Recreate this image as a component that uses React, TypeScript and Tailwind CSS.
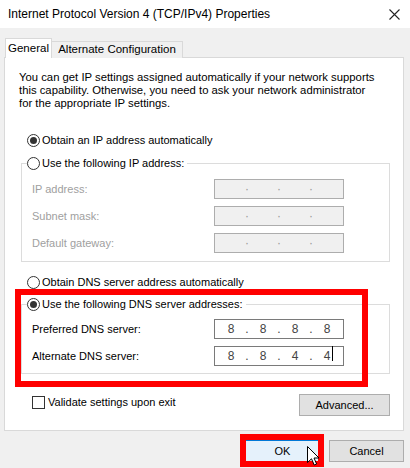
import { Fragment } from "react";

const Radio = ({ checked }: { checked?: boolean }) => (
  <span className="flex h-[13px] w-[13px] shrink-0 items-center justify-center rounded-full border border-[#333] bg-white">
    {checked && <span className="h-[7px] w-[7px] rounded-full bg-[#333]" />}
  </span>
);

const IpBox = ({ values, enabled, caret }: { values: string[]; enabled?: boolean; caret?: boolean }) => (
  <div
    className={`flex h-[20px] w-[130px] items-center border text-[12px] ${
      enabled ? "border-[#7a7a7a] bg-white text-[#444]" : "border-[#adadad] bg-[#f0f0f0] text-[#999]"
    }`}
  >
    {values.map((v, i) => (
      <Fragment key={i}>
        {i > 0 && <span className="flex w-0 justify-center">{enabled ? "." : "·"}</span>}
        <span className="flex flex-1 justify-center">
          <span className="relative">
            {v}
            {caret && i === 3 && <span className="absolute right-[-3px] top-[-1px] h-[15px] w-px bg-black" />}
          </span>
        </span>
      </Fragment>
    ))}
  </div>
);

const Row = ({ label, disabled, children }: { label: string; disabled?: boolean; children: React.ReactNode }) => (
  <div className="flex h-[20px] items-center">
    <span className={`w-[182px] ${disabled ? "text-[#a0a0a0]" : "text-black"}`}>{label}</span>
    {children}
  </div>
);

const Button = ({ label, w, primary }: { label: string; w: string; primary?: boolean }) => (
  <div
    className={`flex h-[22px] items-center justify-center border text-[11px] ${w} ${
      primary ? "border-[#0078d7] bg-[#e5f1fb]" : "border-[#adadad] bg-[#e1e1e1]"
    }`}
  >
    {label}
  </div>
);

export default function App() {
  const empty = ["", "", "", ""];
  return (
    <div className="relative h-[468px] w-[410px] overflow-hidden bg-[#f0f0f0] font-['Liberation_Sans',Arial,sans-serif] text-[11px] text-black">
      {/* title bar */}
      <div className="flex h-[28px] items-center justify-between bg-white pl-[8px] pr-[10px]">
        <span className="text-[12px]">Internet Protocol Version 4 (TCP/IPv4) Properties</span>
        <svg width="11" height="11" viewBox="0 0 11 11" className="mt-[1px]">
          <path d="M0.5 0.5 L10.5 10.5 M10.5 0.5 L0.5 10.5" stroke="#222" strokeWidth="1.1" />
        </svg>
      </div>

      <div className="px-[4px] pt-[10px]">
        {/* tabs */}
        <div className="relative z-10 -mb-px flex h-[20px] items-end pl-[1px] text-[11.5px]">
          <div className="flex h-[20px] w-[47px] items-center justify-center border border-b-0 border-[#d9d9d9] bg-white pt-[1px]">
            General
          </div>
          <div className="flex h-[17px] w-[131px] items-center justify-center border border-b-0 border-l-0 border-[#d9d9d9] bg-[#f0f0f0]">
            Alternate Configuration
          </div>
        </div>

        {/* panel */}
        <div className="h-[374px] w-[400px] border border-[#d9d9d9] bg-white pl-[14px] pt-[13px]">
          <p className="text-[11.3px] leading-[13px]">
            You can get IP settings assigned automatically if your network supports
            <br />
            this capability. Otherwise, you need to ask your network administrator
            <br />
            for the appropriate IP settings.
          </p>

          <div className="ml-[8px] mt-[22px] flex h-[16px] items-center gap-[2px]">
            <Radio checked />
            <span>Obtain an IP address automatically</span>
          </div>

          <fieldset className="ml-[2px] mt-[7px] w-[369px] border border-[#dcdcdc]">
            <legend className="ml-[5px] flex h-[16px] items-center gap-[2px] bg-white pr-[3px]">
              <Radio />
              <span>Use the following IP address:</span>
            </legend>
            <div className="flex flex-col gap-[7px] pb-[8px] pl-[10px] pt-[8px]">
              <Row label="IP address:" disabled>
                <IpBox values={empty} />
              </Row>
              <Row label="Subnet mask:" disabled>
                <IpBox values={empty} />
              </Row>
              <Row label="Default gateway:" disabled>
                <IpBox values={empty} />
              </Row>
            </div>
          </fieldset>

          <div className="ml-[8px] mt-[12px] flex h-[16px] items-center gap-[2px]">
            <Radio />
            <span>Obtain DNS server address automatically</span>
          </div>

          <fieldset className="ml-[2px] mt-[6px] w-[369px] border border-[#dcdcdc]">
            <legend className="ml-[5px] flex h-[16px] items-center gap-[2px] bg-white pr-[3px]">
              <Radio checked />
              <span>Use the following DNS server addresses:</span>
            </legend>
            <div className="flex flex-col gap-[7px] pb-[7px] pl-[10px] pt-[7px]">
              <Row label="Preferred DNS server:">
                <IpBox values={["8", "8", "8", "8"]} enabled />
              </Row>
              <Row label="Alternate DNS server:">
                <IpBox values={["8", "8", "4", "4"]} enabled caret />
              </Row>
            </div>
          </fieldset>

          <div className="mt-[20px] flex items-start justify-between pr-[13px]">
            <label className="ml-[13px] flex items-center gap-[3px]">
              <span className="h-[13px] w-[13px] border border-[#333] bg-white" />
              <span>Validate settings upon exit</span>
            </label>
            <Button label="Advanced..." w="w-[91px]" />
          </div>
        </div>
      </div>

      {/* dialog buttons */}
      <div className="mt-[9px] flex justify-end gap-[9px] pr-[6px]">
        <Button label="OK" w="w-[75px]" primary />
        <Button label="Cancel" w="w-[75px]" />
      </div>

      {/* red highlight overlays */}
      <div className="pointer-events-none absolute left-[15px] top-[289px] h-[98px] w-[353px] border-[6px] border-[#ff0000]" />
      <div className="pointer-events-none absolute left-[240px] top-[434px] h-[33px] w-[84px] border-[6px] border-[#ff0000]" />

      {/* mouse cursor */}
      <svg className="absolute left-[307px] top-[446px]" width="13" height="21" viewBox="0 0 13 21">
        <path d="M0.5 0.5 L0.5 16.5 L4.5 12.8 L7.2 19 L9.6 18 L7 12 L12 12 Z" fill="white" stroke="black" strokeWidth="1" />
      </svg>
    </div>
  );
}
